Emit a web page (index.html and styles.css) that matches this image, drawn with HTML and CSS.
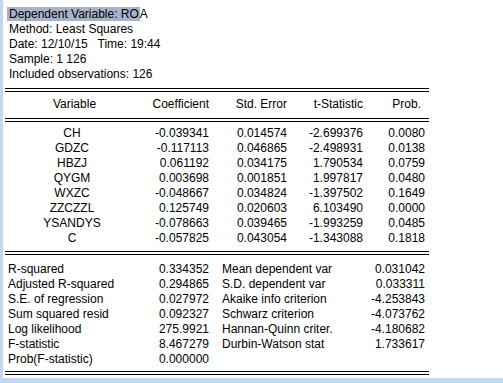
FILE: index.html
```html
<!DOCTYPE html>
<html>
<head>
<meta charset="utf-8">
<title>Equation output</title>
<link rel="stylesheet" href="styles.css">
</head>
<body>
<div class="window">
  <div class="pane">
    <div class="info">
      <div class="info-line"><span class="sel">Dependent Variable: RO</span>A</div>
      <div class="info-line">Method: Least Squares</div>
      <div class="info-line">Date: 12/10/15&nbsp;&nbsp; Time: 19:44</div>
      <div class="info-line">Sample: 1 126</div>
      <div class="info-line">Included observations: 126</div>
    </div>

    <div class="rule rule-first"></div>
    <div class="coef-grid head">
      <div class="c-var">Variable</div>
      <div class="c-num">Coefficient</div>
      <div class="c-num">Std. Error</div>
      <div class="c-num">t-Statistic</div>
      <div class="c-num c-prob-h">Prob.</div>
    </div>
    <div class="rule"></div>

    <div class="coef-grid body">
      <div class="c-var">CH</div><div class="c-num">-0.039341</div><div class="c-num">0.014574</div><div class="c-num">-2.699376</div><div class="c-num c-prob">0.0080</div>
      <div class="c-var">GDZC</div><div class="c-num">-0.117113</div><div class="c-num">0.046865</div><div class="c-num">-2.498931</div><div class="c-num c-prob">0.0138</div>
      <div class="c-var">HBZJ</div><div class="c-num">0.061192</div><div class="c-num">0.034175</div><div class="c-num">1.790534</div><div class="c-num c-prob">0.0759</div>
      <div class="c-var">QYGM</div><div class="c-num">0.003698</div><div class="c-num">0.001851</div><div class="c-num">1.997817</div><div class="c-num c-prob">0.0480</div>
      <div class="c-var">WXZC</div><div class="c-num">-0.048667</div><div class="c-num">0.034824</div><div class="c-num">-1.397502</div><div class="c-num c-prob">0.1649</div>
      <div class="c-var">ZZCZZL</div><div class="c-num">0.125749</div><div class="c-num">0.020603</div><div class="c-num">6.103490</div><div class="c-num c-prob">0.0000</div>
      <div class="c-var">YSANDYS</div><div class="c-num">-0.078663</div><div class="c-num">0.039465</div><div class="c-num">-1.993259</div><div class="c-num c-prob">0.0485</div>
      <div class="c-var">C</div><div class="c-num">-0.057825</div><div class="c-num">0.043054</div><div class="c-num">-1.343088</div><div class="c-num c-prob">0.1818</div>
    </div>
    <div class="rule"></div>

    <div class="stat-grid">
      <div class="s-label">R-squared</div><div class="s-val">0.334352</div><div class="s-label2">Mean dependent var</div><div class="s-val2">0.031042</div>
      <div class="s-label">Adjusted R-squared</div><div class="s-val">0.294865</div><div class="s-label2">S.D. dependent var</div><div class="s-val2">0.033311</div>
      <div class="s-label">S.E. of regression</div><div class="s-val">0.027972</div><div class="s-label2">Akaike info criterion</div><div class="s-val2">-4.253843</div>
      <div class="s-label">Sum squared resid</div><div class="s-val">0.092327</div><div class="s-label2">Schwarz criterion</div><div class="s-val2">-4.073762</div>
      <div class="s-label">Log likelihood</div><div class="s-val">275.9921</div><div class="s-label2">Hannan-Quinn criter.</div><div class="s-val2">-4.180682</div>
      <div class="s-label">F-statistic</div><div class="s-val">8.467279</div><div class="s-label2">Durbin-Watson stat</div><div class="s-val2">1.733617</div>
      <div class="s-label">Prob(F-statistic)</div><div class="s-val">0.000000</div><div class="s-label2"></div><div class="s-val2"></div>
    </div>
    <div class="rule"></div>
  </div>
  <div class="bottom-bar"></div>
</div>
</body>
</html>
```

FILE: styles.css
```css
html, body {
  margin: 0;
  padding: 0;
  background: #ffffff;
}

body {
  font-family: "Liberation Sans", Arial, sans-serif;
  font-size: 12px;
  line-height: 15px;
  color: #000000;
}

.window {
  display: flex;
  flex-direction: column;
  height: 383px;
  overflow: hidden;
}

.pane {
  flex: 1;
  border-left: 3px solid #c3d7ee;
  padding: 7px 0 0 2px;
  background: #ffffff;
}

.bottom-bar {
  height: 5px;
  background: #c3d7ee;
}

.info {
  padding-left: 4px;
}

.info-line {
  height: 15px;
  white-space: nowrap;
}

.sel {
  background: #aab1ca;
  padding: 0 1px 0 2px;
  margin-left: -2px;
}

.rule {
  width: 424px;
  height: 2px;
  border-top: 1px solid #000000;
  border-bottom: 1px solid #000000;
}

.rule-first {
  margin-top: 6px;
}

.coef-grid {
  display: grid;
  width: 424px;
  grid-template-columns: 134px 73px 78px 76px 63px;
  grid-auto-rows: 15px;
}

.coef-grid.head {
  padding: 5px 0 6px;
}

.coef-grid.body {
  padding: 4px 0 5px;
}

.c-var {
  text-align: center;
}

.head .c-var {
  padding-left: 5px;
}

.c-num {
  text-align: right;
  padding-right: 3px;
  white-space: nowrap;
}

.c-prob {
  padding-right: 4px;
}

.c-prob-h {
  padding-right: 8px;
}

.stat-grid {
  display: grid;
  width: 424px;
  grid-template-columns: 134px 73px 154px 63px;
  grid-auto-rows: 15px;
  padding: 7px 0 4px;
}

.s-label {
  padding-left: 3px;
  white-space: nowrap;
}

.s-val {
  text-align: right;
  padding-right: 3px;
}

.s-label2 {
  padding-left: 10px;
  white-space: nowrap;
}

.s-val2 {
  text-align: right;
  padding-right: 4px;
}
```
